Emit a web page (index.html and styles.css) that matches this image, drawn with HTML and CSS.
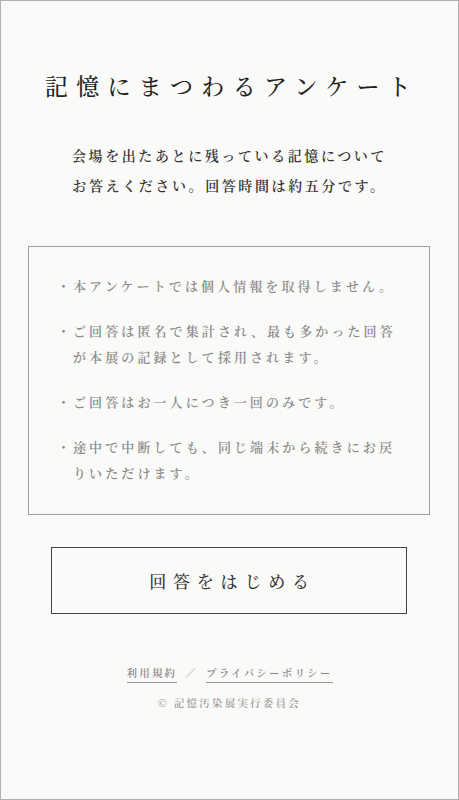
FILE: index.html
```html
<!DOCTYPE html>
<html lang="ja">
<head>
<meta charset="utf-8">
<title>記憶にまつわるアンケート</title>
<link rel="stylesheet" href="styles.css">
</head>
<body>
<main class="page">
  <h1 class="title">記憶にまつわるアンケート</h1>
  <p class="lead">会場を出たあとに残っている記憶について<br>お答えください。回答時間は約五分です。</p>
  <ul class="notes">
    <li class="note"><span class="dot">・</span><span class="note-text">本アンケートでは個人情報を取得しません。</span></li>
    <li class="note"><span class="dot">・</span><span class="note-text">ご回答は匿名で集計され、最も多かった回答が本展の記録として採用されます。</span></li>
    <li class="note"><span class="dot">・</span><span class="note-text">ご回答はお一人につき一回のみです。</span></li>
    <li class="note"><span class="dot">・</span><span class="note-text">途中で中断しても、同じ端末から続きにお戻りいただけます。</span></li>
  </ul>
  <button class="start" type="button">回答をはじめる</button>
  <nav class="links">
    <a class="link" href="#">利用規約</a>
    <span class="sep">／</span>
    <a class="link" href="#">プライバシーポリシー</a>
  </nav>
  <p class="copy">© 記憶汚染展実行委員会</p>
</main>
</body>
</html>
```
FILE: styles.css
```css
html, body {
  margin: 0;
  padding: 0;
  background: #fafaf8;
}
body {
  font-family: "Noto Serif CJK JP", "Noto Sans CJK JP", serif;
  color: #222;
}
.page {
  box-sizing: border-box;
  min-height: 100vh;
  border: 1px solid #b0b0b0;
  padding-top: 69px;
  display: flex;
  flex-direction: column;
  align-items: stretch;
}
.title {
  margin: 0;
  padding-left: 5px;
  font-size: 23px;
  line-height: 32px;
  font-weight: 500;
  letter-spacing: 8.3px;
  text-align: center;
  color: #222;
}
.lead {
  margin: 38px 0 0;
  font-size: 14px;
  line-height: 30px;
  letter-spacing: 2.6px;
  text-align: center;
  color: #333;
  font-weight: 600;
}
.notes {
  list-style: none;
  margin: 46px 28px 0 27px;
  padding: 26px 10px 28px 28px;
  border: 1px solid #a0a0a0;
  display: flex;
  flex-direction: column;
  gap: 19px;
}
.note {
  display: flex;
  font-size: 13px;
  line-height: 26px;
  letter-spacing: 3.1px;
  color: #8a8a8a;
  font-weight: 600;
}
.dot {
  width: 16px;
  flex: none;
  letter-spacing: 0;
  text-align: left;
}
.note-text {
  width: 326px;
}
.start {
  margin: 32px 51px 0 50px;
  height: 67px;
  background: transparent;
  border: 1px solid #444;
  font-family: inherit;
  font-size: 17px;
  letter-spacing: 6.8px;
  color: #333;
  font-weight: 500;
  padding: 0 0 0 7px;
  cursor: pointer;
}
.links {
  margin-top: 50px;
  display: flex;
  justify-content: center;
  align-items: flex-start;
  gap: 8px;
  font-size: 10.5px;
  line-height: 17px;
  letter-spacing: 2.2px;
  color: #888;
  font-weight: 600;
}
.link {
  color: #888;
  text-decoration: none;
  border-bottom: 1px solid #999;
  padding-bottom: 1px;
}
.sep {
  color: #888;
}
.copy {
  margin: 11px 0 0;
  text-align: center;
  font-size: 10.5px;
  line-height: 17px;
  letter-spacing: 2.2px;
  color: #9a9a9a;
  font-weight: 600;
}
```
